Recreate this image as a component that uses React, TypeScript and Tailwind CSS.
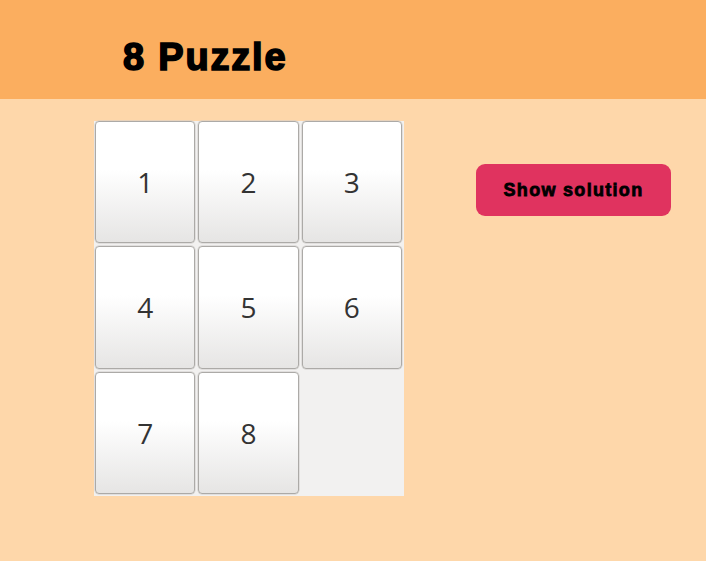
import React from "react";

const tiles: (number | null)[] = [1, 2, 3, 4, 5, 6, 7, 8, null];

export default function App() {
  return (
    <div className="min-h-[561px] w-full bg-[#fed7aa]" style={{ fontFamily: '"Liberation Sans", Arial, sans-serif' }}>
      <header className="h-[99px] bg-[#fbae5f] flex items-center pl-[123px]">
        <h1 className="text-[38px] font-bold tracking-[1.8px] text-black leading-none mt-[14px] [-webkit-text-stroke:1.6px_black]">8 Puzzle</h1>
      </header>
      <div className="flex items-start pt-[22px] pl-[94px]">
        <div className="w-[310px] h-[375px] bg-[#f2f1f0] grid grid-cols-3 grid-rows-3 gap-[3px] pl-[1px] pr-[2px] pb-[2px]">
          {tiles.map((t, i) =>
            t === null ? (
              <div key={i} />
            ) : (
              <div
                key={i}
                className="rounded-[4px] border border-[#acaaa7] bg-gradient-to-b from-white from-40% to-[#e6e5e4] shadow-[inset_0_1px_0_#fff,0_0_0_0.5px_#d0cecb] flex items-center justify-center text-[28px] text-[#333]"
                style={{ fontFamily: '"Open Sans", "Noto Sans", sans-serif' }}
              >
                {t}
              </div>
            )
          )}
        </div>
        <button className="ml-[72px] mt-[43px] w-[195px] h-[52px] rounded-[9px] bg-[#e0335f] text-black text-[18px] font-bold tracking-[1.3px] [-webkit-text-stroke:0.8px_black]">
          Show solution
        </button>
      </div>
    </div>
  );
}
